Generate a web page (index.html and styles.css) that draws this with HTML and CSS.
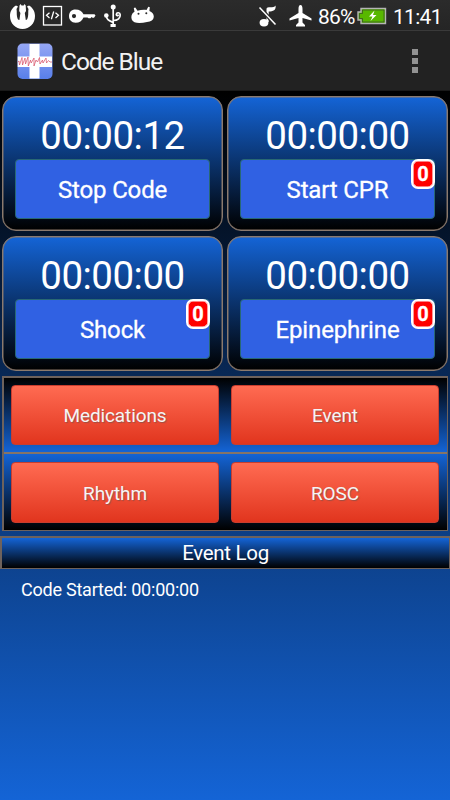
FILE: index.html
```html
<!DOCTYPE html>
<html lang="en">
<head>
<meta charset="utf-8">
<title>Code Blue</title>
<link rel="stylesheet" href="styles.css">
</head>
<body>
<div class="screen">
  <header class="status">
    <svg class="status-left" width="170" height="30" viewBox="0 0 170 30" fill="#fff">
      <path d="M16 5.500C12.500 7.500 10 11 10 16C10 23.500 15.500 29 22.500 29C29.500 29 35 23.500 35 16C35 11 32.500 7.500 29 5.500L27 6.500L28.500 9C28 11 28.500 14 28 16.500C27.500 19 27 20 25.800 20L24.800 13L26 11L25.700 5.500L24.500 4L23.700 5.500H21.500L20.700 4L19.500 5.500L19.200 11L20.400 13L19.400 20C18 20 17.500 19 17 16.500C16.500 14 17 11 16.500 9L18 6.500Z"/>
      <g fill="none" stroke="#fff"><rect x="43.500" y="6.500" width="18" height="18.500" stroke-width="1.300"/><path d="M49.500 12.700L46.500 15.300L49.500 18M55.500 12.700L58.500 15.300L55.500 18M53.700 11.500L51.400 19.200" stroke-width="1.300"/></g>
      <path fill-rule="evenodd" d="M75.500 9.500C79.500 9.500 82 11.500 83.500 14.200H94.500L95.500 15.500L94 17.800H92.500L91.500 17L90.500 18.200H88.500L87.500 17.500H83.500C82 21 79.500 22.800 75.500 22.800C71.500 22.800 69 20 69 16.100C69 12.200 71.500 9.500 75.500 9.500ZM74 14A2.100 2.100 0 1 0 74 18.200A2.100 2.100 0 1 0 74 14Z"/>
      <circle cx="113.200" cy="7" r="2.500"/><rect x="110.500" y="24" width="5.200" height="3"/><circle cx="106.300" cy="15.500" r="2.300"/>
      <path d="M113.200 7V25M106.300 15.500C106.300 19.500 109 20.500 113.200 22.500M113.200 20.500C118 20.500 120.400 18 120.200 14.800C120 12.300 116.700 12 116.300 14.300C116.200 16 118.200 16.200 118.400 14.700" fill="none" stroke="#fff" stroke-width="1.700"/>
      <path fill-rule="evenodd" d="M133.800 8L135.300 7.600L137.500 10.800C140.500 9.900 143.500 9.700 146.500 10L148.300 6.800L149.800 7.300L149.400 10.900C152.200 12.200 153.800 14 153.800 16.500C153.500 20.500 151 21.500 147 22C142.500 23 137.500 23.400 134.500 22.200C131.700 21 131 18 131.500 15.700C132 13.800 133 12.500 134.500 11.700ZM138.500 12.800A1 1 0 1 0 138.500 14.800A1 1 0 1 0 138.500 12.800ZM146.300 12.200A1 1 0 1 0 146.300 14.200A1 1 0 1 0 146.300 12.200Z"/>
    </svg>
    <svg class="status-right" width="58" height="30" viewBox="256 0 58 30" fill="#fff">
      <ellipse cx="264" cy="22.700" rx="4.400" ry="3.700"/><path d="M266.500 22V9C266.500 6 274 8.500 275.500 5.500C276.500 10 273 11.500 268.700 11.500V22Z"/><path d="M259 7L276 25" stroke="#292929" stroke-width="4"/><path d="M259.500 7.500L275.500 24.500" stroke="#fff" stroke-width="1.500"/>
      <path d="M300.500 5C302 5 302.500 7 302.500 9V13L311.500 18.500V20.500L302.500 18V22.500L305 25V26.500H296V25L298.500 22.500V18L289.500 20.500V18.500L298.500 13V9C298.500 7 299 5 300.500 5Z"/>
    </svg>
    <span class="percent">86%</span>
    <svg class="battery" width="30" height="18" viewBox="357 7 30 18"><path d="M361 8.500H385.500V23.500H361V20H358V12H361Z" fill="#54b400" stroke="#b5b5b5" stroke-width="1.400"/><path d="M362.500 10H384V22H362.500V18.500H359.500V13.500H362.500Z" fill="#58b800" stroke="#343a2e" stroke-width=".6"/><path d="M374.500 10.500L369 16.500H372.500L370.500 21L376.500 15H373Z" fill="#fff"/></svg>
    <span class="clock">11:41</span>
  </header>

  <div class="action-bar">
    <svg class="logo" width="36" height="37" viewBox="0 0 36 37">
      <defs><linearGradient id="tile" x2="0" y2="1"><stop stop-color="#96a7f5"/><stop offset="1" stop-color="#587fe9"/></linearGradient></defs>
      <rect x=".5" y=".5" width="35" height="35.500" rx="5" fill="url(#tile)"/>
      <path d="M12.500 1H22.500V13.500H35V24H22.500V35.500H12.500V24H.7V13.500H12.500Z" fill="#fff"/>
      <path d="M.8 19L2 18L2.500 22L5 14.500L5.500 22L8 15L8.500 21L11 14L11.300 23L13.500 17L14.200 20L17 15L17 23L19 17L20.500 19L22.500 14.500L23 21L25.500 17L26 20L29 15L29.500 20L31.500 17.500L33 19H35" fill="none" stroke="#d8556c" stroke-width=".75"/>
    </svg>
    <h1 class="title">Code Blue</h1>
    <div class="overflow"><i></i><i></i><i></i></div>
  </div>

  <main class="content">
    <section class="timers">
      <div class="card"><div class="time">00:00:12</div><div class="action">Stop Code</div></div>
      <div class="card"><div class="time">00:00:00</div><div class="action">Start CPR<b class="badge">0</b></div></div>
      <div class="card"><div class="time">00:00:00</div><div class="action">Shock<b class="badge">0</b></div></div>
      <div class="card"><div class="time">00:00:00</div><div class="action">Epinephrine<b class="badge">0</b></div></div>
    </section>
    <section class="panel">
      <div class="row row-top"><div class="red">Medications</div><div class="red">Event</div></div>
      <div class="row row-bottom"><div class="red">Rhythm</div><div class="red">ROSC</div></div>
    </section>
    <h2 class="log-title">Event Log</h2>
    <div class="log-entry">Code Started: 00:00:00</div>
  </main>
</div>
</body>
</html>
```

FILE: styles.css
```css
* { box-sizing: border-box; }
body { margin: 0; background: #000; }
.screen {
  width: 450px; height: 800px; overflow: hidden;
  display: flex; flex-direction: column;
  font-family: Roboto, "Liberation Sans", sans-serif; color: #fff;
}
.status {
  height: 30px; flex: none; display: flex; align-items: flex-start;
  background: linear-gradient(#2b2b2b, #252525);
  font-size: 21px; line-height: 34px;
}
.status svg { flex: none; }
.status-right { margin-left: 86px; }
.percent { width: 39px; margin-left: 4px; white-space: nowrap; letter-spacing: -.8px; }
.battery { margin: 7px 0 0 0; }
.clock { margin-left: 6px; letter-spacing: -.7px; }
.action-bar {
  height: 61px; flex: none; display: flex; align-items: center;
  background: #222; border-top: 1px solid #3a3a3a; border-bottom: 1px solid #191919;
  padding: 1px 32px 0 17px;
}
.title { margin: 2px 0 0 8px; font-size: 24.5px; font-weight: 400; line-height: 30px; letter-spacing: -1.05px; color: #f2f2f2; }
.overflow { margin-left: auto; display: grid; gap: 3px; width: 6px; }
.overflow i { width: 6px; height: 6px; background: #929292; }
.content {
  flex: 1; padding-top: 5px;
  background: linear-gradient(#000, #1464d6);
}
.timers { display: grid; grid-template-columns: 221px 221px; gap: 5px 4px; padding: 0 2px; }
.card {
  height: 135px; padding: 17px 12px 0; border: 1px solid #8b7a6e; border-radius: 14px;
  background: linear-gradient(#1464d6, #000);
  box-shadow: inset 0 0 0 .5px #857468;
}
.time { height: 45px; font-size: 38.5px; line-height: 43px; letter-spacing: -.5px; text-align: center; white-space: nowrap; }
.action {
  position: relative; height: 60px; border: 1px solid #286874; border-radius: 4px;
  background: #3061e3; text-align: center; font-size: 24px; line-height: 60px;
  letter-spacing: -.15px; -webkit-text-stroke: .3px #fff;
}
.badge {
  position: absolute; top: -1px; right: -1px; width: 24px; height: 30px;
  border: 2px solid #fff; border-radius: 7px; background: #f00;
  box-shadow: inset 0 0 0 .6px #fff;
  font-size: 20px; line-height: 26px; font-weight: 700;
}
.panel { margin: 5px 2px 0; height: 155px; border: 1px solid #6e625c; border-width: 2px 1px 1px 2px; }
.row { display: grid; grid-template-columns: 208px 208px; gap: 12px; padding: 7px 7px 0; }
.row-top { height: 76px; background: linear-gradient(#000, #1464d6); border-bottom: 2px solid #857468; }
.row-bottom { height: 76px; padding-top: 8px; background: linear-gradient(#1464d6, #000); }
.red {
  height: 60px; border: 1px solid #c93d2e; border-radius: 4px;
  background: linear-gradient(#ff6b52, #e1351e);
  text-align: center; font-size: 19px; line-height: 60px; letter-spacing: -.1px; color: #f5f5f5;
  text-shadow: 1px 1px 1px #5558;
}
.row-bottom .red { height: 61px; line-height: 61px; }
.log-title {
  margin: 5px 0 0; height: 33px; border: 1px solid #6e625c; border-width: 2px 1px 1px 2px;
  background: linear-gradient(#1464d6, #000);
  text-align: center; font-size: 20.5px; font-weight: 400; line-height: 30px; letter-spacing: -.3px;
}
.log-entry { padding: 10px 21px; font-size: 18px; line-height: 22px; letter-spacing: -.23px; }
```
